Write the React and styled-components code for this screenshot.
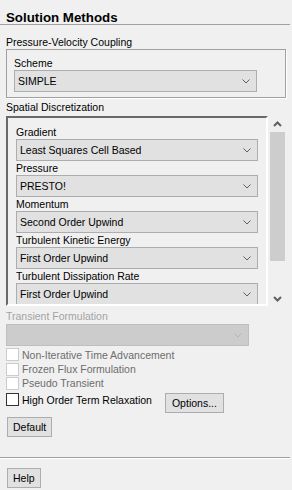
import React from "react";
import styled, { createGlobalStyle } from "styled-components";

const GlobalStyle = createGlobalStyle`
  html, body {
    margin: 0;
    padding: 0;
    background: #f0f0f0;
  }
  body {
    font-family: "Liberation Sans", Arial, sans-serif;
    font-size: 10.5px;
    color: #000;
  }
`;

const Panel = styled.div`
  width: 292px;
  height: 490px;
  display: flex;
  flex-direction: column;
  box-sizing: border-box;
  background: #f0f0f0;
`;

const Title = styled.div`
  height: 25px;
  box-sizing: border-box;
  padding: 10px 0 0 6px;
  margin-right: 2px;
  font-size: 13.3px;
  font-weight: bold;
  line-height: 15px;
  border-bottom: 1px solid #a0a0a0;
`;

const Body = styled.div`
  display: flex;
  flex-direction: column;
  padding: 0 6px;
`;

const SectionLabel = styled.div`
  line-height: 13px;
  height: 13px;
  margin-top: ${(p) => p.$top || 0}px;
  color: ${(p) => (p.$disabled ? "#a3a3a3" : "#000")};
  white-space: nowrap;
`;

const GroupBox = styled.div`
  width: 280px;
  box-sizing: border-box;
  border: 1px solid #a0a0a0;
  box-shadow: 1px 1px 0 #fff;
  padding: 6px 0 5px 7px;
`;

const FieldLabel = styled.div`
  line-height: 14px;
  height: 14px;
  white-space: nowrap;
`;

const Combo = styled.div`
  width: ${(p) => p.$width}px;
  height: 22px;
  box-sizing: border-box;
  border: 1px solid ${(p) => (p.$disabled ? "#bfbfbf" : "#adadad")};
  background: ${(p) => (p.$disabled ? "#cccccc" : "#e1e1e1")};
  display: flex;
  align-items: center;
  justify-content: space-between;
  padding: 0 6px 0 3px;
  margin-top: ${(p) => p.$top || 0}px;
  flex-shrink: 0;
  line-height: 14px;
  white-space: nowrap;
`;

const ScrollRow = styled.div`
  display: flex;
  margin-top: 2px;
  gap: 1px;
`;

const ScrollPane = styled.div`
  width: 262px;
  height: 190px;
  box-sizing: border-box;
  border-style: solid;
  border-width: 2px;
  border-color: #696969 #ffffff #ffffff #696969;
  overflow: hidden;
  padding: 7px 0 0 8px;
  display: flex;
  flex-direction: column;
`;

const ScrollBar = styled.div`
  width: 17px;
  height: 190px;
  display: flex;
  flex-direction: column;
  align-items: center;
`;

const ArrowBtn = styled.div`
  height: 15px;
  width: 17px;
  display: flex;
  align-items: center;
  justify-content: center;
`;

const Thumb = styled.div`
  width: 15px;
  height: 129px;
  margin-top: 1px;
  background: #cdcdcd;
`;

const Track = styled.div`
  flex: 1;
`;

const CheckRow = styled.div`
  display: flex;
  align-items: center;
  height: ${(p) => p.$h || 14}px;
  margin-top: ${(p) => p.$top || 0}px;
  gap: 3px;
  white-space: nowrap;
  color: ${(p) => (p.$disabled ? "#6d6d6d" : "#000")};
`;

const Box = styled.span`
  width: 13px;
  height: 13px;
  box-sizing: border-box;
  border: 1px solid ${(p) => (p.$disabled ? "#cccccc" : "#333333")};
  background: #fff;
  flex-shrink: 0;
`;

const OptionsRow = styled.div`
  display: flex;
  align-items: flex-start;
  margin-top: 3px;
`;

const Button = styled.div`
  height: 20px;
  box-sizing: border-box;
  border: 1px solid #adadad;
  background: #e1e1e1;
  padding: 0 ${(p) => p.$pad || 5}px;
  display: inline-flex;
  align-items: center;
  line-height: 14px;
  white-space: nowrap;
  margin-left: ${(p) => p.$left || 0}px;
  margin-top: ${(p) => p.$top || 0}px;
  align-self: flex-start;
`;

const Separator = styled.div`
  height: 1px;
  margin: 20px 2px 0 0;
  background: #a0a0a0;
  border-bottom: 1px solid #fff;
`;

const Footer = styled.div`
  padding: 9px 0 0 7px;
`;

const Chevron = ({ disabled }) => (
  <svg width="8" height="5" viewBox="0 0 8 5">
    <polyline
      points="0.5,0.5 4,4 7.5,0.5"
      fill="none"
      stroke={disabled ? "#b5b5b5" : "#606060"}
      strokeWidth="1"
    />
  </svg>
);

const ScrollArrow = ({ up }) => (
  <svg width="9" height="6" viewBox="0 0 9 6">
    <polyline
      points={up ? "1,5 4.5,1.5 8,5" : "1,1 4.5,4.5 8,1"}
      fill="none"
      stroke="#606060"
      strokeWidth="2"
    />
  </svg>
);

const ComboBox = ({ value, width, disabled, top }) => (
  <Combo $width={width} $disabled={disabled} $top={top}>
    <span>{value}</span>
    <Chevron disabled={disabled} />
  </Combo>
);

const discretization = [
  ["Gradient", "Least Squares Cell Based"],
  ["Pressure", "PRESTO!"],
  ["Momentum", "Second Order Upwind"],
  ["Turbulent Kinetic Energy", "First Order Upwind"],
  ["Turbulent Dissipation Rate", "First Order Upwind"],
];

export default function App() {
  return (
    <Panel>
      <GlobalStyle />
      <Title>Solution Methods</Title>
      <Body>
        <SectionLabel $top={11}>Pressure-Velocity Coupling</SectionLabel>
        <GroupBox>
          <FieldLabel>Scheme</FieldLabel>
          <ComboBox value="SIMPLE" width={243} />
        </GroupBox>
        <SectionLabel $top={3}>Spatial Discretization</SectionLabel>
        <ScrollRow>
          <ScrollPane>
            {discretization.map(([label, value]) => (
              <React.Fragment key={label}>
                <FieldLabel>{label}</FieldLabel>
                <ComboBox value={value} width={242} />
              </React.Fragment>
            ))}
          </ScrollPane>
          <ScrollBar>
            <ArrowBtn>
              <ScrollArrow up />
            </ArrowBtn>
            <Thumb />
            <Track />
            <ArrowBtn>
              <ScrollArrow />
            </ArrowBtn>
          </ScrollBar>
        </ScrollRow>
        <SectionLabel $top={4} $disabled>
          Transient Formulation
        </SectionLabel>
        <ComboBox value="" width={243} disabled top={1} />
        <CheckRow $disabled $h={15} $top={1}>
          <Box $disabled />
          Non-Iterative Time Advancement
        </CheckRow>
        <CheckRow $disabled $h={14}>
          <Box $disabled />
          Frozen Flux Formulation
        </CheckRow>
        <CheckRow $disabled $h={14}>
          <Box $disabled />
          Pseudo Transient
        </CheckRow>
        <OptionsRow>
          <CheckRow $h={13}>
            <Box />
            High Order Term Relaxation
          </CheckRow>
          <Button $left={13} $pad={6}>
            Options...
          </Button>
        </OptionsRow>
        <Button $left={1} $top={4}>
          Default
        </Button>
      </Body>
      <Separator />
      <Footer>
        <Button>Help</Button>
      </Footer>
    </Panel>
  );
}
